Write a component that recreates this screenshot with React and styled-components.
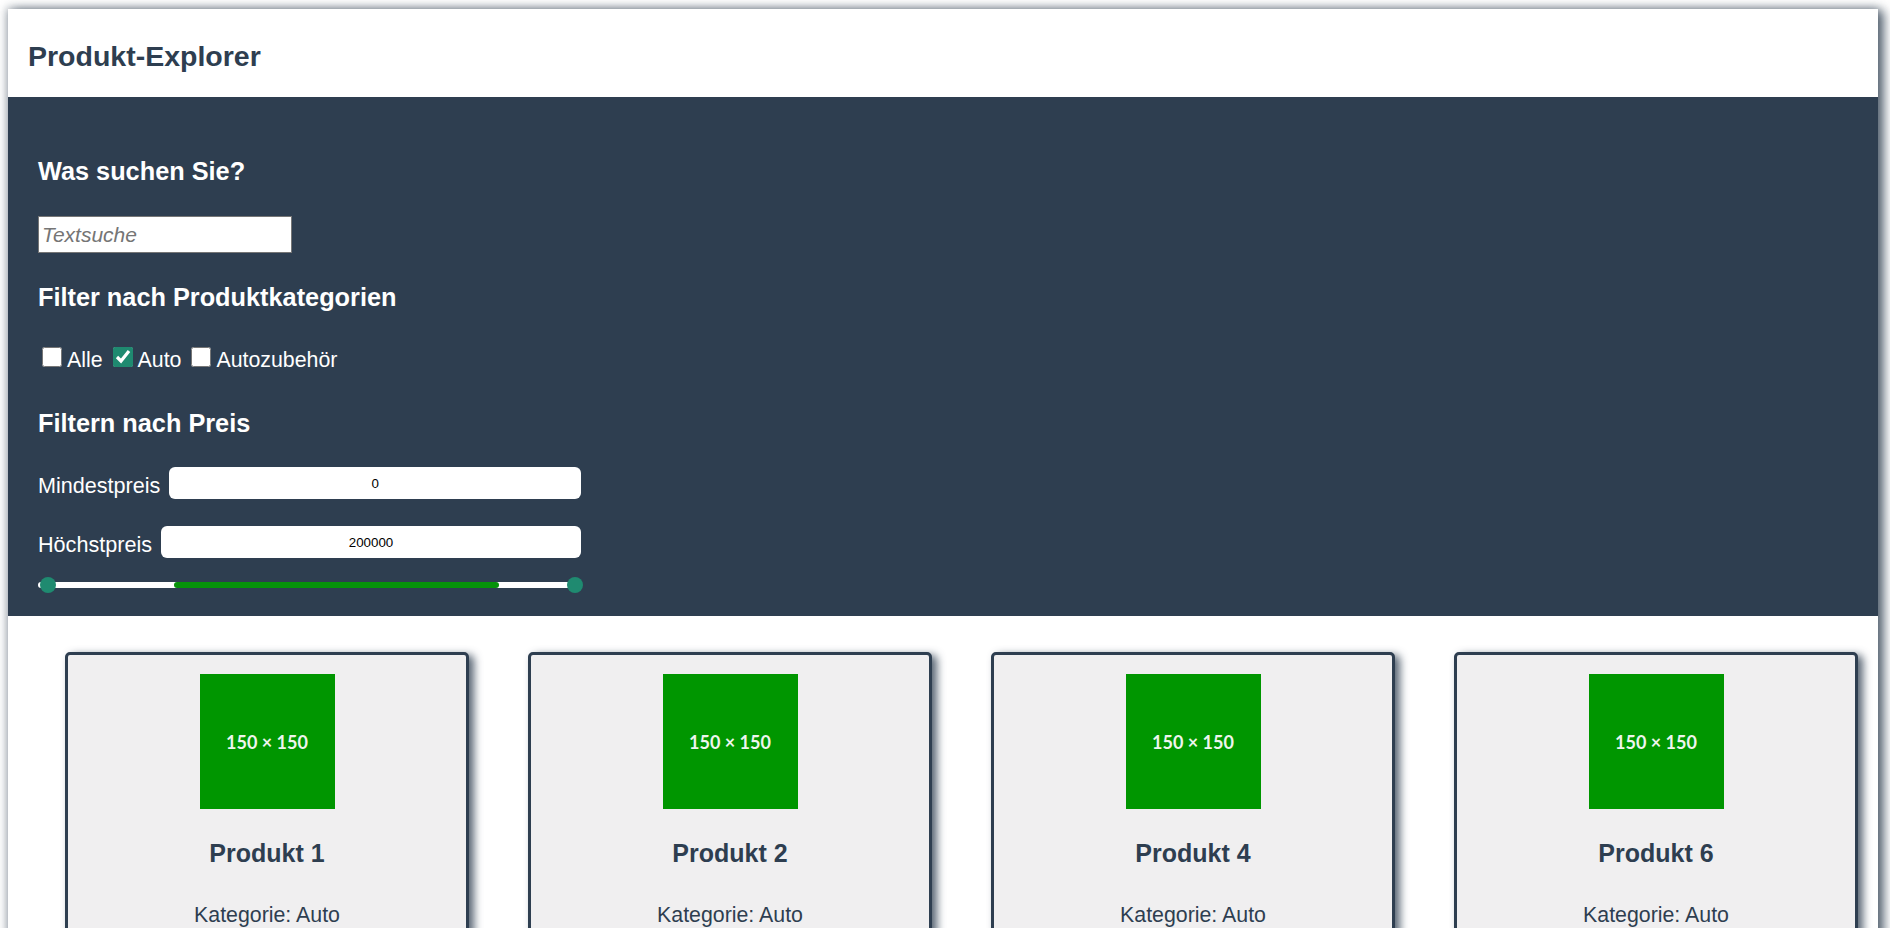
import React from "react";
import styled, { createGlobalStyle } from "styled-components";

const GlobalStyle = createGlobalStyle`
body {
  margin: 0;
  font-family: "Liberation Sans", Arial, sans-serif;
  background: #fff;
}
`;

const Frame = styled.div`
padding: 9px 12px 0 8px;
`;

const Page = styled.div`
background: #fff;
box-shadow: 0 0 9px 1px rgba(46, 62, 80, 0.45), 6px 2px 10px rgba(46, 62, 80, 0.7);
`;

const Header = styled.header`
height: 88px;
box-sizing: border-box;
padding: 7px 0 0 20px;
display: flex;
align-items: center;
`;

const Title = styled.h1`
margin: 0;
font-size: 28.5px;
font-weight: bold;
color: #2e3e50;
`;

const FilterPanel = styled.section`
background: #2e3e50;
color: #fff;
padding: 60px 30px 23px;
display: flex;
flex-direction: column;
align-items: flex-start;
`;

const Heading = styled.h2`
margin: ${(p) => p.$top || 0}px 0 0;
font-size: 25.3px;
font-weight: bold;
color: #fff;
`;

const SearchInput = styled.input`
margin-top: 30px;
width: 254px;
height: 37px;
box-sizing: border-box;
border: 1px solid #767676;
padding: 0 3px;
font-family: "Liberation Sans", Arial, sans-serif;
font-size: 21px;
&::placeholder{
    font-style: italic;
    color: #757575;
}
`;

const CheckRow = styled.div`
margin-top: 35px;
display: flex;
align-items: baseline;
gap: 6px;
font-size: 21.33px;
`;

const Check = styled.label`
display: inline-flex;
align-items: baseline;
`;

const Box = styled.input`
width: 20px;
height: 20px;
margin: 0 5px 0 4px;
accent-color: #1f8a70;
`;

const PriceRow = styled.div`
margin-top: ${(p) => p.$top}px;
width: 543px;
display: flex;
align-items: flex-end;
gap: 9px;
font-size: 21.6px;
`;

const PriceInput = styled.input`
flex: 1;
min-width: 0;
height: 32px;
box-sizing: border-box;
border: none;
border-radius: 6px;
text-align: center;
font-family: "Liberation Sans", Arial, sans-serif;
font-size: 13.33px;
color: #000;
`;

const Slider = styled.div`
position: relative;
margin-top: 18px;
width: 543px;
height: 17px;
`;

const Track = styled.div`
margin-top: 6px;
height: 6px;
border-radius: 3px;
background: #fff;
`;

const Range = styled.div`
position: absolute;
top: 6px;
height: 6px;
border-radius: 3px;
background: #06920a;
`;

const Thumb = styled.div`
position: absolute;
top: 1px;
width: 16px;
height: 16px;
border-radius: 50%;
background: #1f8a70;
`;

const Products = styled.section`
padding: 36px 0 0 57px;
display: flex;
gap: 59px;
`;

const Card = styled.div`
width: 404px;
box-sizing: border-box;
border: 3px solid #2e3e50;
border-radius: 5px;
background: #f0eff0;
box-shadow: 5px 3px 8px rgba(46, 62, 80, 0.8);
padding: 19px 20px 24px;
display: flex;
flex-direction: column;
align-items: center;
color: #2e3e50;
`;

const Picture = styled.div`
width: 135px;
height: 135px;
background: #009600;
display: flex;
align-items: center;
justify-content: center;
font-family: Lato, "Liberation Sans", sans-serif;
font-weight: bold;
font-size: 18px;
color: #eef5ee;
`;

const ProductName = styled.h2`
margin: 30px 0 0;
font-size: 25px;
font-weight: bold;
`;

const Category = styled.p`
margin: 35px 0 0;
font-size: 21.33px;
`;

const products = [
    { id: 1, name: "Produkt 1", category: "Auto" },
    { id: 2, name: "Produkt 2", category: "Auto" },
    { id: 4, name: "Produkt 4", category: "Auto" },
    { id: 6, name: "Produkt 6", category: "Auto" },
];

const categories = [
    { name: "Alle", checked: false },
    { name: "Auto", checked: true },
    { name: "Autozubehör", checked: false },
];

const App = () => {
    return (
        <Frame>
            <GlobalStyle />
            <Page>
                <Header>
                    <Title>Produkt-Explorer</Title>
                </Header>
                <FilterPanel>
                    <Heading>Was suchen Sie?</Heading>
                    <SearchInput placeholder="Textsuche" />
                    <Heading $top={30}>Filter nach Produktkategorien</Heading>
                    <CheckRow>
                        {categories.map((c) => (
                            <Check key={c.name}>
                                <Box type="checkbox" defaultChecked={c.checked} />
                                {c.name}
                            </Check>
                        ))}
                    </CheckRow>
                    <Heading $top={36}>Filtern nach Preis</Heading>
                    <PriceRow $top={29}>
                        Mindestpreis
                        <PriceInput defaultValue="0" />
                    </PriceRow>
                    <PriceRow $top={27}>
                        Höchstpreis
                        <PriceInput defaultValue="200000" />
                    </PriceRow>
                    <Slider>
                        <Track />
                        <Range style={{ left: 136, width: 325 }} />
                        <Thumb style={{ left: 2 }} />
                        <Thumb style={{ left: 529 }} />
                    </Slider>
                </FilterPanel>
                <Products>
                    {products.map((p) => (
                        <Card key={p.id}>
                            <Picture>150 × 150</Picture>
                            <ProductName>{p.name}</ProductName>
                            <Category>Kategorie: {p.category}</Category>
                        </Card>
                    ))}
                </Products>
            </Page>
        </Frame>
    );
};

export default App;
